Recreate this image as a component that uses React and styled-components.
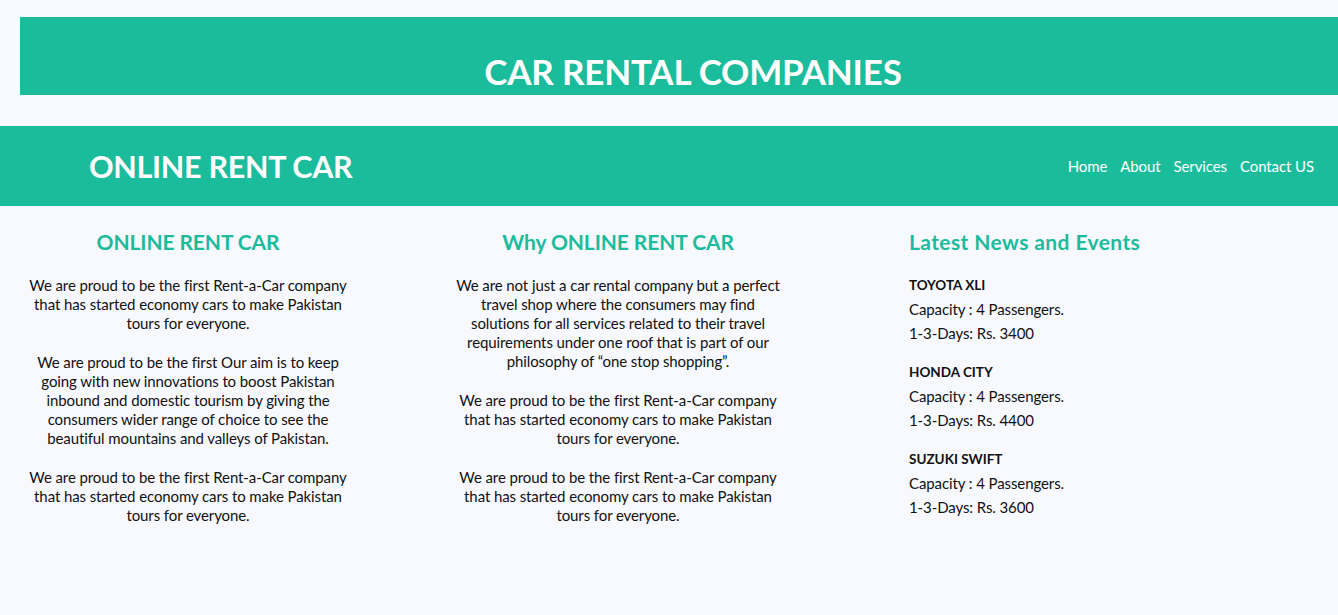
import React from 'react'
import styled, { createGlobalStyle } from 'styled-components'

const teal = '#1bbc9b'

const GlobalStyle = createGlobalStyle`
  body {
    margin: 0;
    background: #f8f9fe;
    font-family: Lato, "Open Sans", sans-serif;
    color: #111;
  }
`

const Page = styled.div`
  padding-top: 17px;
  min-height: 598px;
`

const Banner = styled.h1`
  margin: 0 0 0 20px;
  height: 78px;
  background: ${teal};
  color: #fff;
  font-size: 35px;
  font-weight: 700;
  letter-spacing: -0.2px;
  display: flex;
  align-items: flex-end;
  justify-content: center;
  padding-left: 28px;
  padding-bottom: 3px;
  box-sizing: border-box;
`

const NavBar = styled.header`
  margin-top: 31px;
  height: 80px;
  background: ${teal};
  display: flex;
  align-items: center;
  justify-content: space-between;
  padding: 0 24px 0 89px;
`

const Brand = styled.div`
  color: #fff;
  font-size: 30.5px;
  font-weight: 700;
  letter-spacing: -0.3px;
`

const NavList = styled.nav`
  display: flex;
  gap: 13px;
`

const NavLink = styled.a`
  color: #fff;
  font-size: 15px;
  text-decoration: none;
  letter-spacing: -0.1px;
`

const Content = styled.main`
  display: grid;
  grid-template-columns: 336px 330px 1fr;
  column-gap: 97px;
  padding: 0 20px;
`

const Column = styled.section`
  text-align: ${({ $align }) => $align || 'center'};
  padding-left: ${({ $indent }) => $indent || 0};
`

const Heading = styled.h2`
  color: ${teal};
  font-size: 21px;
  font-weight: 700;
  margin: 23px 0 22px;
  letter-spacing: ${({ $wide }) => ($wide ? '0.4px' : '-0.1px')};
`

const Para = styled.p`
  font-size: 15px;
  line-height: 19px;
  margin: 0 0 20px;
  letter-spacing: -0.1px;
`

const Car = styled.div`
  margin-bottom: 18px;
`

const CarName = styled.div`
  font-size: 13.5px;
  font-weight: 700;
  line-height: 24px;
  margin-top: -3px;
`

const CarLine = styled.div`
  font-size: 15px;
  line-height: 24px;
  letter-spacing: -0.1px;
`

const proud =
  'We are proud to be the first Rent-a-Car company that has started economy cars to make Pakistan tours for everyone.'

const cars = [
  { name: 'TOYOTA XLI', price: '3400' },
  { name: 'HONDA CITY', price: '4400' },
  { name: 'SUZUKI SWIFT', price: '3600' },
]

export default function App() {
  return (
    <Page>
      <GlobalStyle />
      <Banner>CAR RENTAL COMPANIES</Banner>
      <NavBar>
        <Brand>ONLINE RENT CAR</Brand>
        <NavList>
          <NavLink href="#">Home</NavLink>
          <NavLink href="#">About</NavLink>
          <NavLink href="#">Services</NavLink>
          <NavLink href="#">Contact US</NavLink>
        </NavList>
      </NavBar>
      <Content>
        <Column>
          <Heading>ONLINE RENT CAR</Heading>
          <Para>{proud}</Para>
          <Para>
            We are proud to be the first Our aim is to keep going with new innovations to boost
            Pakistan inbound and domestic tourism by giving the consumers wider range of choice to
            see the beautiful mountains and valleys of Pakistan.
          </Para>
          <Para>{proud}</Para>
        </Column>
        <Column>
          <Heading>Why ONLINE RENT CAR</Heading>
          <Para>
            We are not just a car rental company but a perfect travel shop where the consumers may
            find solutions for all services related to their travel requirements under one roof that
            is part of our philosophy of “one stop shopping”.
          </Para>
          <Para>{proud}</Para>
          <Para>{proud}</Para>
        </Column>
        <Column $align="left" $indent="29px">
          <Heading $wide>Latest News and Events</Heading>
          {cars.map((c) => (
            <Car key={c.name}>
              <CarName>{c.name}</CarName>
              <CarLine>Capacity : 4 Passengers.</CarLine>
              <CarLine>1-3-Days: Rs. {c.price}</CarLine>
            </Car>
          ))}
        </Column>
      </Content>
    </Page>
  )
}
